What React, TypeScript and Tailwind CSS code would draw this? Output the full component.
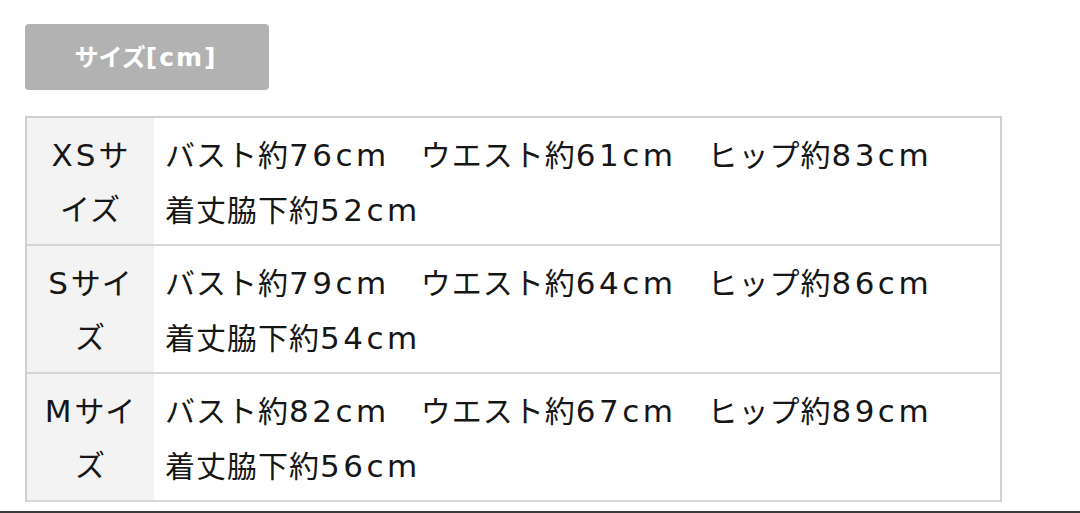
const rows = [
    { label: ["XSサ", "イズ"], lines: ["バスト約76cm　ウエスト約61cm　ヒップ約83cm", "着丈脇下約52cm"] },
    { label: ["Sサイ", "ズ"], lines: ["バスト約79cm　ウエスト約64cm　ヒップ約86cm", "着丈脇下約54cm"] },
    { label: ["Mサイ", "ズ"], lines: ["バスト約82cm　ウエスト約67cm　ヒップ約89cm", "着丈脇下約56cm"] },
];

// latin runs are a touch bigger and wider than the kana/kanji around them
function Mixed({ text, wide }: { text: string; wide: string }) {
    const parts = text.split(/([A-Za-z0-9\[\]]+)/).filter((p) => p !== "");
    return (
        <>
            {parts.map((p, i) =>
                /^[A-Za-z0-9\[\]]+$/.test(p) ? (
                    <span key={i} className={wide}>{p}</span>
                ) : (
                    p
                )
            )}
        </>
    );
}

export default function App() {
    return (
        <div
            className="w-[1080px] h-[513px] bg-white overflow-hidden border-b-2 border-[#3a3a3a] text-[#161616]"
            style={{ fontFamily: '"DejaVu Sans", "Noto Sans CJK JP", sans-serif' }}
        >
            <div className="pl-[25px] pt-[24px]">
                <div className="w-[244px] h-[66px] rounded-[4px] bg-[#b2b2b2] flex items-center justify-center text-white text-[24px] font-bold leading-none pr-[2px]">
                    <span>
                        <Mixed text="サイズ[cm]" wide="text-[25px] tracking-[2px]" />
                    </span>
                </div>

                <div className="mt-[26px] w-[977px] border-l-2 border-r-2 border-t-2 border-[#cfcfcf]">
                    {rows.map((row) => (
                        <div key={row.lines[1]} className="flex border-b-2 border-[#d6d6d6] h-[128px]">
                            <div className="w-[127px] shrink-0 bg-[#f3f3f3] pt-[10px] text-center text-[30px] leading-[54px] tracking-[1px]">
                                {row.label.map((part) => (
                                    <p key={part} className="whitespace-pre">
                                        <Mixed text={part} wide="text-[31px] tracking-[3px]" />
                                    </p>
                                ))}
                            </div>
                            <div className="flex-1 pl-[11px] pt-[10px] text-[30px] leading-[54px] tracking-[1px]">
                                {row.lines.map((line) => (
                                    <p key={line} className="whitespace-pre">
                                        <Mixed text={line} wide="text-[31px] tracking-[3.5px]" />
                                    </p>
                                ))}
                            </div>
                        </div>
                    ))}
                </div>
            </div>
        </div>
    );
}
